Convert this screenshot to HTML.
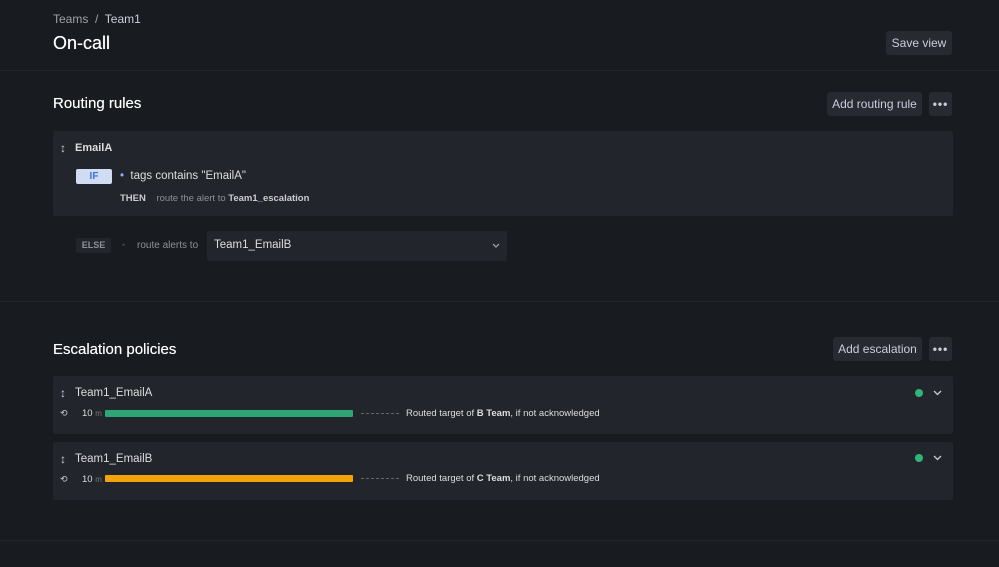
<!DOCTYPE html>
<html><head><style>
*{box-sizing:border-box;margin:0;padding:0}
body{width:999px;height:567px;background:#181b1f;font-family:"Liberation Sans",sans-serif;color:#ccccdc;position:relative;overflow:hidden}
.a{position:absolute}
.btn{position:absolute;background:#272a30;border-radius:3px;color:#ccccdc;font-size:12px;display:flex;align-items:center;justify-content:center}
.hr{position:absolute;left:0;width:999px;height:1px;background:#23262b}
.card{position:absolute;left:53px;width:900px;background:#22252b;border-radius:2px}
.dots{font-weight:bold;letter-spacing:1px;font-size:12px}
</style></head><body>
<div class="a" style="left:53px;top:12px;font-size:12px;color:#9fa2a9">Teams &nbsp;/&nbsp; <span style="color:#ccccdc">Team1</span></div>
<div class="a" style="left:53px;top:33px;font-size:18px;color:#fff;text-shadow:0 0 0.4px #fff">On-call</div>
<div class="btn" style="left:886px;top:31px;width:66px;height:24px">Save view</div>
<div class="hr" style="top:70px"></div>
<div class="a" style="left:53px;top:95px;font-size:15px;color:#fff;text-shadow:0 0 0.4px #fff">Routing rules</div>
<div class="btn" style="left:827px;top:92px;width:95px;height:24px">Add routing rule</div>
<div class="btn dots" style="left:929px;top:92px;width:23px;height:24px">•••</div>
<div class="card" style="top:131px;height:85px"></div>
<div class="a" style="left:60px;top:141px;font-size:12px">↕</div>
<div class="a" style="left:75px;top:142px;font-size:11px;color:#ddd;font-weight:bold">EmailA</div>
<div class="a" style="left:76px;top:169px;width:36px;height:15px;background:#cfdcf2;border-radius:2px;color:#3d71d9;font-size:10px;font-weight:bold;text-align:center;line-height:15px">IF</div>
<div class="a" style="left:120px;top:170px;font-size:11.5px;color:#ddd"><span style="color:#8fb3f0">•</span>&nbsp; tags contains "EmailA"</div>
<div class="a" style="left:120px;top:193px;font-size:9.5px;color:#8e9096"><b style="color:#ccc">THEN</b>&nbsp;&nbsp;&nbsp; route the alert to <b style="color:#ccc">Team1_escalation</b></div>
<div class="a" style="left:76px;top:238px;width:35px;height:15px;background:#22252b;border-radius:2px;color:#8e9096;font-size:9px;font-weight:bold;text-align:center;line-height:15px">ELSE</div>
<div class="a" style="left:122px;top:240px;font-size:9px;color:#444">•</div>
<div class="a" style="left:137px;top:240px;font-size:10px;color:#8e9096">route alerts to</div>
<div class="a" style="left:207px;top:231px;width:300px;height:30px;background:#22252b;border-radius:2px"></div>
<div class="a" style="left:214px;top:239px;font-size:11.5px;color:#ddd">Team1_EmailB</div>
<svg class="a" style="left:492px;top:243px" width="8" height="6"><path d="M1 1l3 3 3-3" stroke="#aaa" fill="none" stroke-width="1.2"/></svg>
<div class="hr" style="top:301px"></div>
<div class="a" style="left:53px;top:341px;font-size:15px;color:#fff;text-shadow:0 0 0.4px #fff">Escalation policies</div>
<div class="btn" style="left:833px;top:337px;width:89px;height:24px">Add escalation</div>
<div class="btn dots" style="left:929px;top:337px;width:23px;height:24px">•••</div>

<div class="card" style="top:376px;height:58px"></div>
<div class="a" style="left:60px;top:386px;font-size:12px">↕</div>
<div class="a" style="left:75px;top:387px;font-size:11.5px;color:#ddd">Team1_EmailA</div>
<div class="a" style="left:60px;top:408px;font-size:9px">⟲</div>
<div class="a" style="left:82px;top:408px;font-size:9.5px;color:#ddd">10 <span style="color:#777;font-size:8px">m</span></div>
<div class="a" style="left:105px;top:410px;width:248px;height:7px;background:#2fa575;border-radius:1px"></div>
<div class="a" style="left:361px;top:413px;width:38px;border-top:1px dashed #666"></div>
<div class="a" style="left:406px;top:408px;font-size:9.5px;color:#ddd">Routed target of <b>B Team</b>, if not acknowledged</div>
<div class="a" style="left:915px;top:389px;width:8px;height:8px;border-radius:50%;background:#2fb57c"></div>
<svg class="a" style="left:933px;top:390px" width="9" height="6"><path d="M1 1l3.5 3.5 3.5-3.5" stroke="#ccc" fill="none" stroke-width="1.3"/></svg>

<div class="card" style="top:442px;height:58px"></div>
<div class="a" style="left:60px;top:452px;font-size:12px">↕</div>
<div class="a" style="left:75px;top:453px;font-size:11.5px;color:#ddd">Team1_EmailB</div>
<div class="a" style="left:60px;top:474px;font-size:9px">⟲</div>
<div class="a" style="left:82px;top:474px;font-size:9.5px;color:#ddd">10 <span style="color:#777;font-size:8px">m</span></div>
<div class="a" style="left:105px;top:475px;width:248px;height:7px;background:#f2a30a;border-radius:1px"></div>
<div class="a" style="left:361px;top:478px;width:38px;border-top:1px dashed #666"></div>
<div class="a" style="left:406px;top:473px;font-size:9.5px;color:#ddd">Routed target of <b>C Team</b>, if not acknowledged</div>
<div class="a" style="left:915px;top:454px;width:8px;height:8px;border-radius:50%;background:#2fb57c"></div>
<svg class="a" style="left:933px;top:455px" width="9" height="6"><path d="M1 1l3.5 3.5 3.5-3.5" stroke="#ccc" fill="none" stroke-width="1.3"/></svg>
<div class="hr" style="top:540px"></div>
</body></html>
